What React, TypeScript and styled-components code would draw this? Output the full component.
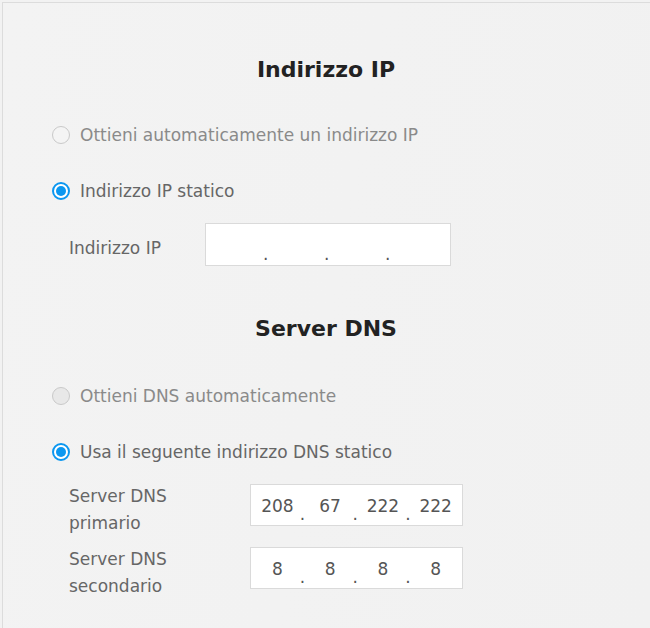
import styled, { createGlobalStyle } from "styled-components";

const GlobalStyle = createGlobalStyle`
  html, body {
    margin: 0;
    padding: 0;
    background: #f2f2f2;
  }
  body {
    font-family: "DejaVu Sans", "Liberation Sans", sans-serif;
  }
`;

const Page = styled.div`
  padding: 2px 0 0 2px;
  min-height: 628px;
  box-sizing: border-box;
`;

const Panel = styled.div`
  border-top: 1px solid #dcdcdc;
  border-left: 1px solid #dcdcdc;
  min-height: 626px;
  box-sizing: border-box;
  padding: 52px 0 0 49px;
  background: linear-gradient(100deg, #f3f3f3 0%, #f1f1f1 100%);
`;

const Section = styled.section`
  display: flex;
  flex-direction: column;
  width: 548px;
`;

const Title = styled.h2<{ $top: number }>`
  margin: ${(p) => p.$top}px 0 0;
  font-size: 22px;
  line-height: 30px;
  font-weight: 700;
  color: #222;
  text-align: center;
`;

const RadioRow = styled.label<{ $top: number; $muted?: boolean }>`
  display: flex;
  align-items: center;
  gap: 10px;
  height: 24px;
  margin-top: ${(p) => p.$top}px;
  font-size: 17px;
  color: ${(p) => (p.$muted ? "#8a8a8a" : "#666")};
  cursor: pointer;
`;

const Radio = styled.span<{ $checked?: boolean; $disabled?: boolean }>`
  width: 18px;
  height: 18px;
  box-sizing: border-box;
  border-radius: 50%;
  display: flex;
  align-items: center;
  justify-content: center;
  flex-shrink: 0;
  border: ${(p) => (p.$checked ? "2px solid #0b97f0" : "1px solid #c9c9c9")};
  background: ${(p) => (p.$checked ? "#fff" : p.$disabled ? "#e8e8e8" : "#f4f4f4")};
  &::after {
    content: "";
    display: ${(p) => (p.$checked ? "block" : "none")};
    width: 10px;
    height: 10px;
    border-radius: 50%;
    background: #0b97f0;
  }
`;

const FieldRow = styled.div<{ $top: number; $height: number }>`
  display: flex;
  align-items: flex-start;
  height: ${(p) => p.$height}px;
  margin-top: ${(p) => p.$top}px;
  padding-left: 17px;
`;

const FieldLabel = styled.div<{ $width: number; $offset: number }>`
  width: ${(p) => p.$width}px;
  flex-shrink: 0;
  font-size: 17px;
  line-height: 27px;
  color: #666;
  margin-top: ${(p) => p.$offset}px;
`;

const IpBox = styled.div<{ $width: number; $height: number }>`
  display: flex;
  align-items: center;
  width: ${(p) => p.$width}px;
  height: ${(p) => p.$height}px;
  box-sizing: border-box;
  background: #fff;
  border: 1px solid #dadada;
`;

const Octet = styled.span`
  flex: 1;
  text-align: center;
  font-size: 17px;
  color: #555;
  padding-top: 1px;
`;

const Dot = styled.span`
  width: 4px;
  align-self: flex-end;
  padding-bottom: 2px;
  font-size: 17px;
  line-height: 17px;
  color: #555;
  margin-left: -4px;
`;

function IpInput({ values, width, height }: { values: string[]; width: number; height: number }) {
  return (
    <IpBox $width={width} $height={height}>
      {values.map((v, i) => (
        <>
          <Octet key={"o" + i}>{v}</Octet>
          {i < values.length - 1 && <Dot key={"d" + i}>.</Dot>}
        </>
      ))}
    </IpBox>
  );
}

export default function App() {
  return (
    <>
      <GlobalStyle />
      <Page>
        <Panel>
          <Section>
            <Title $top={0}>Indirizzo IP</Title>
            <RadioRow $top={38} $muted>
              <Radio />
              Ottieni automaticamente un indirizzo IP
            </RadioRow>
            <RadioRow $top={32}>
              <Radio $checked />
              Indirizzo IP statico
            </RadioRow>
            <FieldRow $top={20} $height={43}>
              <FieldLabel $width={136} $offset={12}>
                Indirizzo IP
              </FieldLabel>
              <IpInput values={["", "", "", ""]} width={246} height={43} />
            </FieldRow>

            <Title $top={48}>Server DNS</Title>
            <RadioRow $top={40} $muted>
              <Radio $disabled />
              Ottieni DNS automaticamente
            </RadioRow>
            <RadioRow $top={32}>
              <Radio $checked />
              Usa il seguente indirizzo DNS statico
            </RadioRow>
            <FieldRow $top={20} $height={42}>
              <FieldLabel $width={181} $offset={-1}>
                Server DNS
                <br />
                primario
              </FieldLabel>
              <IpInput values={["208", "67", "222", "222"]} width={213} height={42} />
            </FieldRow>
            <FieldRow $top={21} $height={42}>
              <FieldLabel $width={181} $offset={-1}>
                Server DNS
                <br />
                secondario
              </FieldLabel>
              <IpInput values={["8", "8", "8", "8"]} width={213} height={42} />
            </FieldRow>
          </Section>
        </Panel>
      </Page>
    </>
  );
}
